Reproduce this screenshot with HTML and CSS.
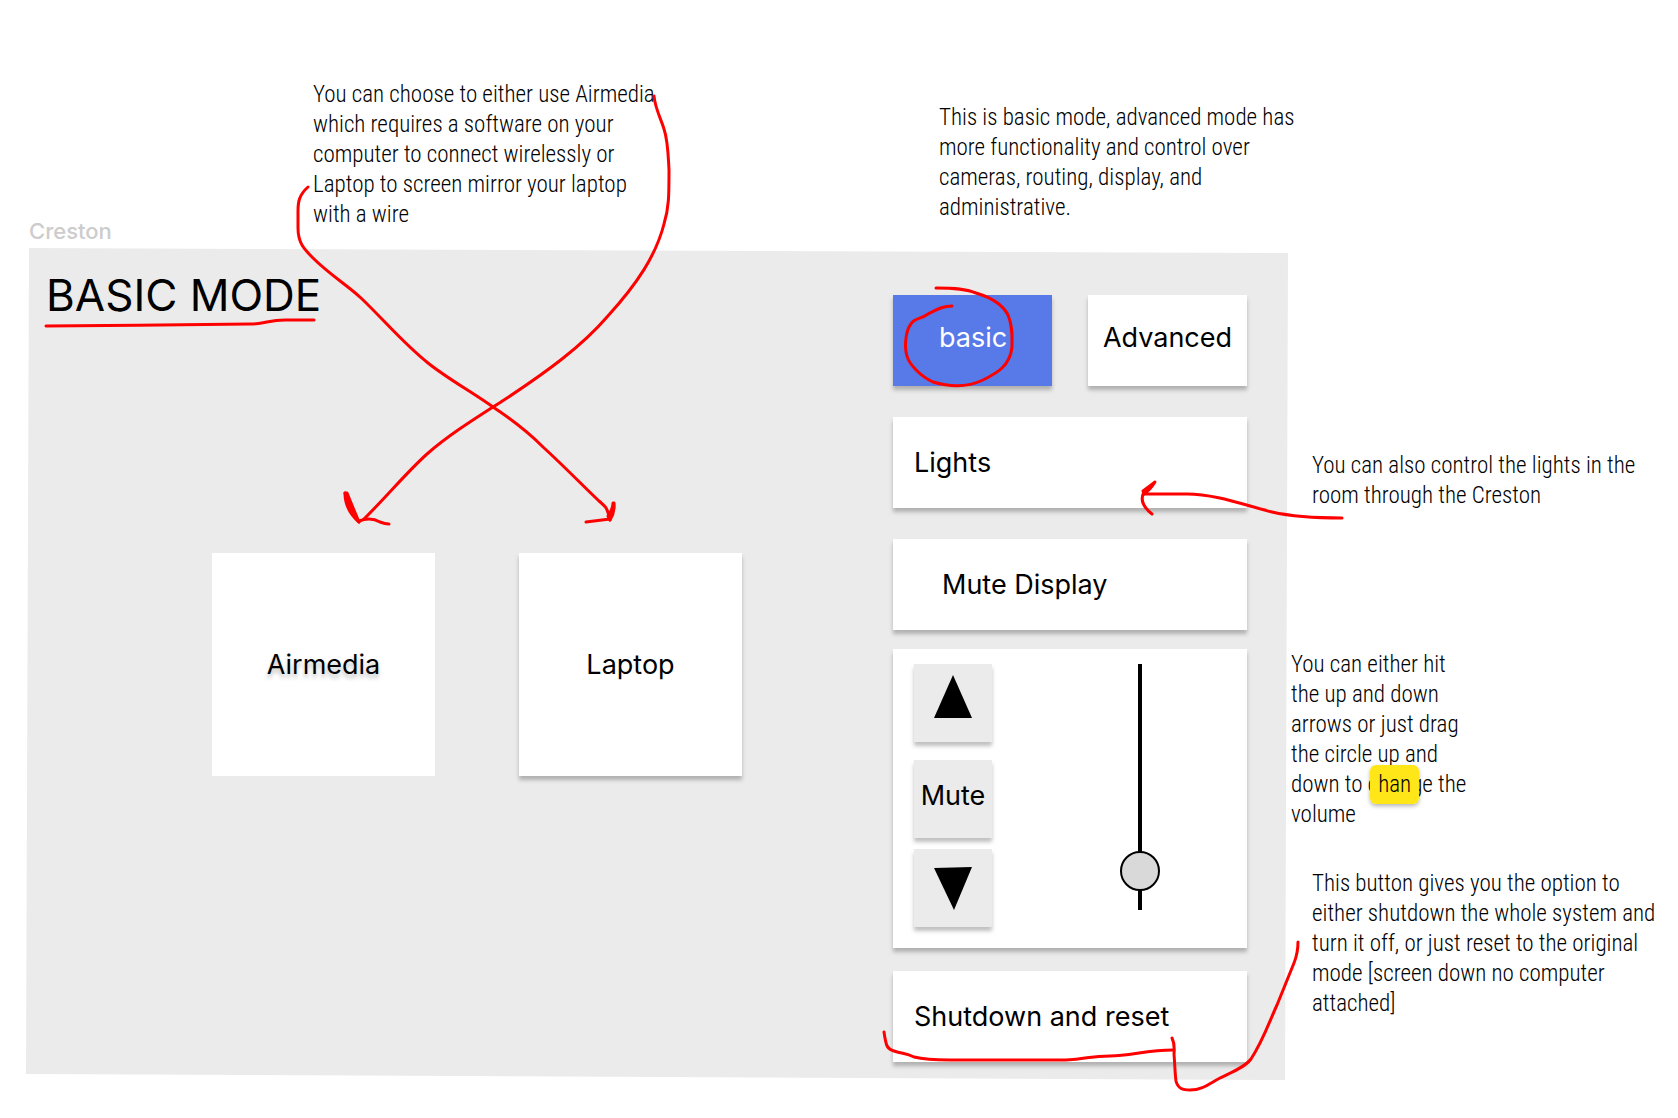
FILE: index.html
```html
<!DOCTYPE html>
<html lang="en">
<head>
<meta charset="utf-8">
<meta name="viewport" content="width=device-width, initial-scale=1">
<title>Creston</title>
<link rel="stylesheet" href="styles.css">
</head>
<body>
<div class="board">
  <header class="top">
    <div class="frame-label">Creston</div>
    <p class="note">You can choose to either use Airmedia<br>which requires a software on your<br>computer to connect wirelessly or<br>Laptop to screen mirror your laptop<br>with a wire</p>
    <p class="note note-mode">This is basic mode, advanced mode has<br>more functionality and control over<br>cameras, routing, display, and<br>administrative.</p>
  </header>

  <main class="frame">
    <section class="sources">
      <h1 class="title">BASIC MODE</h1>
      <div class="tiles">
        <button class="tile tile-flat" type="button">Airmedia</button>
        <button class="tile raised" type="button">Laptop</button>
      </div>
    </section>
    <section class="panel">
      <div class="modes">
        <button class="mode mode-active raised" type="button">basic</button>
        <button class="mode raised" type="button">Advanced</button>
      </div>
      <button class="bar raised" type="button">Lights</button>
      <button class="bar bar-indent raised" type="button">Mute Display</button>
      <div class="volume raised">
        <div class="steps">
          <button class="step raised" type="button" aria-label="Volume up"><svg class="arrow" viewBox="0 0 38 43"><path d="M19 0L38 43H0z"/></svg></button>
          <button class="step step-mute raised" type="button">Mute</button>
          <button class="step step-down raised" type="button" aria-label="Volume down"><svg class="arrow" viewBox="0 0 38 43"><path d="M0 1L38 0L20 43z"/></svg></button>
        </div>
        <input class="slider" type="range" min="0" max="100" value="9" aria-label="Volume">
      </div>
      <button class="bar bar-last raised" type="button">Shutdown and reset</button>
    </section>
  </main>

  <aside class="side">
    <p class="note note-inset">You can also control the lights in the<br>room through the Creston</p>
    <p class="note note-volume">You can either hit<br>the up and down<br>arrows or just drag<br>the circle up and<br>down to c<mark class="tag">han</mark>ge the<br>volume</p>
    <p class="note note-inset note-power">This button gives you the option to<br>either shutdown the whole system and<br>turn it off, or just reset to the original<br>mode [screen down no computer<br>attached]</p>
  </aside>

  <svg class="ink" viewBox="0 0 1678 1118" aria-hidden="true">
    <!-- title underline -->
    <path d="M46 326C110 326 190 324 250 324C266 324 268 320 285 320H314"/>
    <!-- Airmedia -->
    <path d="M654 96C655 108 661 119 664 129C668 141 668 152 669 170C669 195 669 208 664 224C656 255 638 283 607 317C582 346 548 371 504 400C476 418 450 434 427 454C406 473 390 493 364 519"/>
    <path d="M345 493Q347 508 359 522M359 521C369 517 375 519 380 522Q385 524 389 524"/>
    <path class="nib" d="M345 493Q345 510 359 522Q353 508 347 493z"/>
    <!-- Laptop -->
    <path d="M308 187C299 195 298 202 298 211V228C298 243 304 249 313 258C330 275 346 284 361 298C386 322 403 343 428 363C448 379 472 392 493 407C511 419 526 430 543 447C565 467 584 487 599 501C606 507 607 507 610 520"/>
    <path d="M610 519L586 522"/>
    <path class="nib" d="M613 503Q613 509 608 516L610 520Q615 512 614 503z"/>
    <!-- basic -->
    <path d="M936 288C956 288 966 289 976 293C996 299 1004 307 1008 315C1013 327 1012 337 1012 347C1010 366 997 373 983 380C966 388 950 387 933 382C920 376 909 364 907 356C904 347 906 333 909 327C914 317 920 320 928 314C938 309 943 306 952 306"/>
    <!-- Lights -->
    <path d="M1342 518C1314 518 1294 517 1272 512C1244 505 1215 494 1187 494H1144"/>
    <path d="M1144 492Q1138 503 1152 514"/>
    <path class="nib" d="M1155 482Q1150 486 1143 491L1144 494Q1150 490 1155 482z"/>
    <!-- Shutdown -->
    <path d="M884 1032C886 1046 887 1049 894 1051C903 1054 906 1053 914 1057C926 1060 938 1060 950 1060H1066C1087 1059 1090 1056 1110 1056C1130 1056 1147 1050 1173 1050"/>
    <path d="M1172 1038Q1175 1044 1174 1054C1175 1067 1175 1074 1176 1081C1178 1089 1183 1090 1190 1090C1203 1090 1210 1083 1220 1078C1231 1073 1245 1067 1251 1059C1263 1041 1270 1020 1277 1005C1284 988 1289 975 1294 963Q1298 953 1298 942"/>
  </svg>
</div>
</body>
</html>
```
FILE: styles.css
```css
* {
  box-sizing: border-box;
}

body {
  margin: 0;
  background: #fff;
  color: #000;
  font-family: Inter, "Liberation Sans", sans-serif;
}

.board {
  position: relative;
  display: grid;
  grid-template-columns: minmax(0, 1fr) 390px;
  padding-bottom: 38px;
}

.top {
  grid-column: 1 / -1;
  display: grid;
  grid-template-columns: 284px 626px 1fr;
  min-height: 248px;
  padding: 80px 0 0 29px;
}

.frame-label {
  align-self: end;
  padding-bottom: 2px;
  color: #ccc;
  font-size: 22px;
  font-weight: 500;
  line-height: 30px;
}

.note {
  margin: 0;
  font-family: "Roboto Condensed", "Liberation Sans Narrow", Roboto, sans-serif;
  font-size: 23px;
  font-weight: 300;
  line-height: 30px;
  white-space: nowrap;
}

.note-mode {
  margin-top: 23px;
}

.frame {
  position: relative;
  display: grid;
  grid-template-columns: minmax(0, 1fr) 354px;
  margin-left: 26px;
  padding-right: 41px;
}

.frame::before {
  content: "";
  position: absolute;
  inset: 0;
  z-index: -1;
  background: #ebebeb;
  clip-path: polygon(3px 0, 100% 5px, calc(100% - 3px) 100%, 0 calc(100% - 6px));
}

button {
  border: 0;
  padding: 0;
  background: #fff;
  color: #000;
  font: 27px/36px Inter, "Liberation Sans", sans-serif;
}

.raised {
  box-shadow: 0 4px 4px rgba(0, 0, 0, 0.25);
}

.sources {
  padding-top: 20px;
}

.title {
  margin: 0 0 231px 20px;
  font-size: 44px;
  font-weight: 400;
  line-height: 54px;
}

.tiles {
  display: flex;
  gap: 84px;
  padding-left: 186px;
}

.tile {
  width: 223px;
  height: 223px;
}

.tile-flat {
  text-shadow: 0 4px 4px rgba(0, 0, 0, 0.25);
}

.panel {
  display: flex;
  flex-direction: column;
  padding: 47px 0 18px;
}

.modes {
  display: flex;
  justify-content: space-between;
  margin-bottom: 31px;
}

.mode {
  width: 159px;
  height: 91px;
  padding-bottom: 6px;
}

.mode-active {
  padding-left: 46px;
  background: #5879e8;
  color: #fff;
  text-align: left;
}

.bar {
  height: 91px;
  margin-bottom: 31px;
  padding-left: 21px;
  text-align: left;
}

.bar-indent {
  margin-bottom: 19px;
  padding-left: 49px;
}

.bar-last {
  margin-bottom: 0;
}

.volume {
  display: flex;
  justify-content: space-between;
  height: 299px;
  margin-bottom: 23px;
  padding: 15px 87px 0 21px;
  background: #fff;
}

.step {
  display: flex;
  align-items: center;
  justify-content: center;
  width: 78px;
  height: 78px;
  padding-bottom: 14px;
  background: #ebebeb;
}

.step-mute {
  margin: 18px 0 11px;
  padding-bottom: 6px;
}

.step-down {
  padding-bottom: 0;
}

.arrow {
  width: 38px;
  height: 43px;
}

.slider {
  appearance: none;
  writing-mode: vertical-lr;
  direction: rtl;
  width: 40px;
  height: 246px;
  margin: 0;
  background: linear-gradient(#000, #000) center / 4px 100% no-repeat;
}

.slider::-webkit-slider-thumb {
  appearance: none;
  width: 40px;
  height: 40px;
  border: 2px solid #000;
  border-radius: 50%;
  background: #d9d9d9;
}

.side {
  padding-top: 203px;
}

.note-inset {
  padding-left: 24px;
}

.note-volume {
  margin: 139px 0 39px;
  padding-left: 3px;
}

.tag {
  position: relative;
  margin: 0 -8px;
  padding: 6px 8px;
  border-radius: 6px;
  background: #ffe619;
  color: inherit;
  box-shadow: 0 2px 4px rgba(0, 0, 0, 0.3);
}

.ink {
  position: absolute;
  top: 0;
  left: 0;
  width: 100%;
  fill: none;
  stroke: #f00;
  stroke-width: 3;
  stroke-linecap: round;
  stroke-linejoin: round;
  pointer-events: none;
}

.nib {
  fill: #f00;
}
```
